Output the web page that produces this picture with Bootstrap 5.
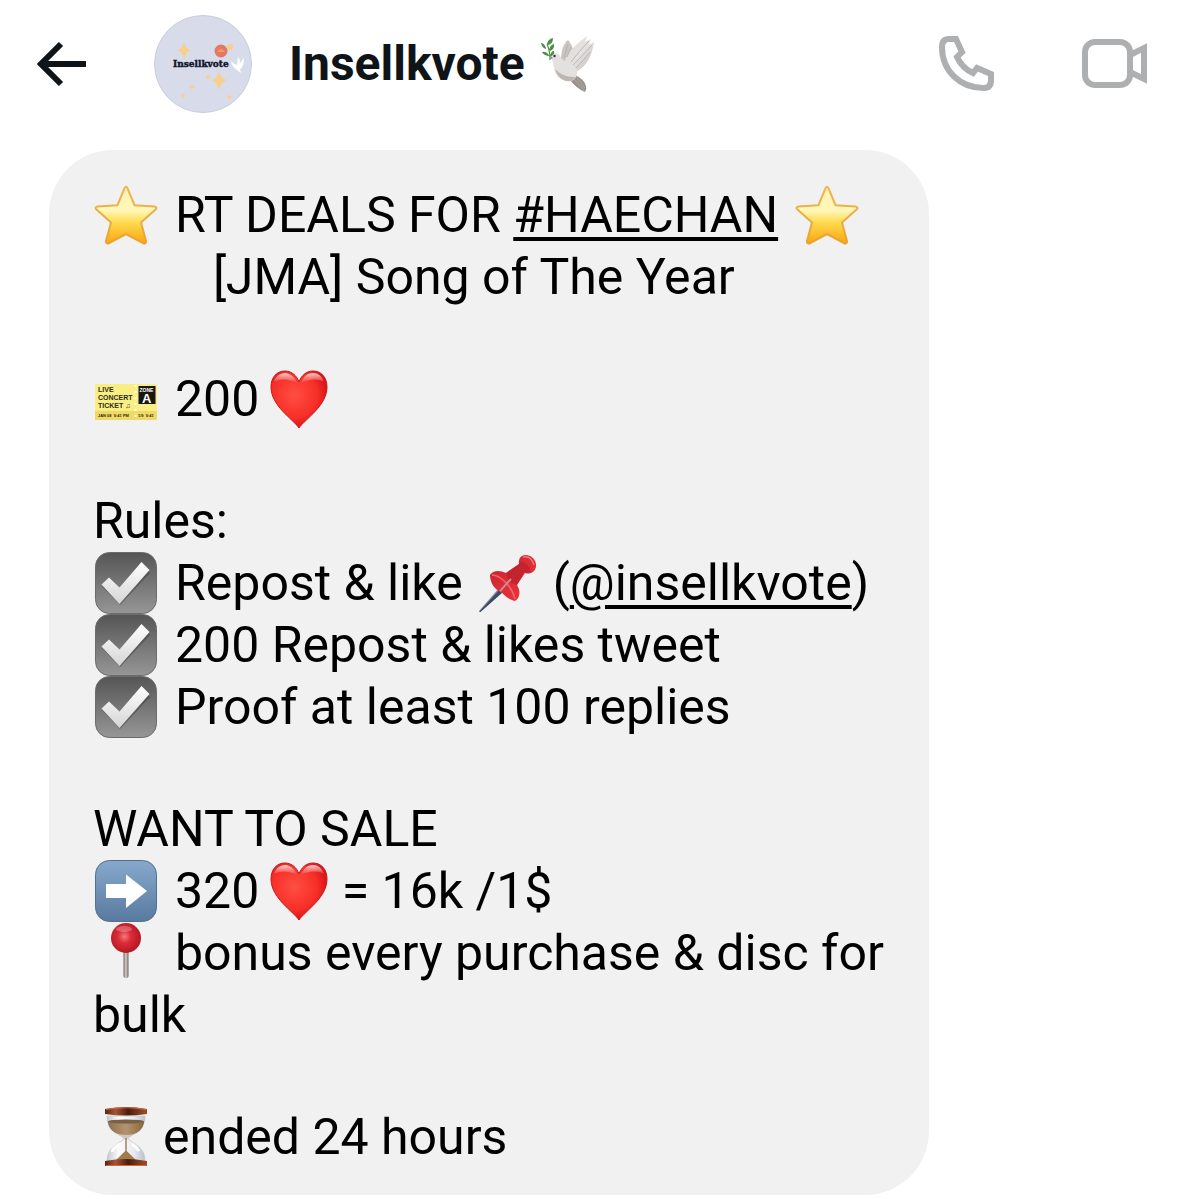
<!DOCTYPE html>
<html lang="en">
<head>
<meta charset="utf-8">
<meta name="viewport" content="width=device-width, initial-scale=1">
<title>Insellkvote</title>
<link href="https://cdn.jsdelivr.net/npm/bootstrap@5.3.0/dist/css/bootstrap.min.css" rel="stylesheet">
<style>
body{background:#fff;color:#000;font-family:Roboto,"Liberation Sans",sans-serif}
svg{display:block}
.chat-head{height:128px;padding:0 52px 0 36px;color:#0f1419}
.icon-btn{color:#adafb0;line-height:1}
.back-btn{color:#0f1419;margin-right:66px}
.avatar{width:98px;height:98px;margin-right:37px}
.chat-name{font-size:48px;line-height:56px;font-weight:700}
.call-btn{margin-right:86px}
.bubble{max-width:880px;margin:22px 49px 0;padding:34px 42px 27px 44px;border-radius:64px;background:#f1f1f1;font-size:50px;line-height:62px}
.block{margin:0 0 60px}
.block:last-child{margin-bottom:0}
.bubble a{color:#000;text-decoration:underline;text-decoration-thickness:4px;text-underline-offset:5px}
.emo{display:inline-block;vertical-align:top;width:66px;height:62px}
.emo-heart{width:60px;margin-left:10px}
.emo-pin{margin:0 12px}
.indent{padding-left:120px}
</style>
<script src="https://cdn.jsdelivr.net/npm/bootstrap@5.3.0/dist/js/bootstrap.bundle.min.js" defer></script>
</head>
<body>
<svg width="0" height="0" class="position-absolute" aria-hidden="true">
<defs>
<linearGradient id="gStar" x1="0" y1="0" x2="0" y2="1"><stop offset="0" stop-color="#fff0b4"/><stop offset=".42" stop-color="#fff7b8"/><stop offset=".62" stop-color="#ffdc50"/><stop offset="1" stop-color="#f9a412"/></linearGradient>
<linearGradient id="gStarEdge" x1="0" y1="0" x2="0" y2="1"><stop offset="0" stop-color="#f0b84c"/><stop offset=".5" stop-color="#e3b04c"/><stop offset="1" stop-color="#eda227"/></linearGradient>
<radialGradient id="gHeart" cx=".42" cy=".42" r=".62"><stop offset="0" stop-color="#ff4e43"/><stop offset=".65" stop-color="#f72f28"/><stop offset="1" stop-color="#d31016"/></radialGradient>
<linearGradient id="gGloss" x1="0" y1="0" x2="0" y2="1"><stop offset="0" stop-color="#fff" stop-opacity=".75"/><stop offset="1" stop-color="#fff" stop-opacity="0"/></linearGradient>
<linearGradient id="gCheck" x1="0" y1="0" x2="0" y2="1"><stop offset="0" stop-color="#555"/><stop offset="1" stop-color="#969696"/></linearGradient>
<linearGradient id="gTick" x1="0" y1="0" x2="0" y2="1"><stop offset="0" stop-color="#fff"/><stop offset="1" stop-color="#d5d5d5"/></linearGradient>
<linearGradient id="gBlue" x1="0" y1="0" x2="0" y2="1"><stop offset="0" stop-color="#86a9cb"/><stop offset="1" stop-color="#587a9f"/></linearGradient>
<radialGradient id="gBall" cx=".45" cy=".45" r=".55"><stop offset="0" stop-color="#f4797c"/><stop offset=".4" stop-color="#dc2c38"/><stop offset="1" stop-color="#b51823"/></radialGradient>
<linearGradient id="gRod" x1="0" y1="0" x2="1" y2="0"><stop offset="0" stop-color="#6c625d"/><stop offset=".45" stop-color="#d8cfc9"/><stop offset="1" stop-color="#71655f"/></linearGradient>
<linearGradient id="gWood" x1="0" y1="0" x2="1" y2="0"><stop offset="0" stop-color="#5a2413"/><stop offset=".25" stop-color="#a65636"/><stop offset=".55" stop-color="#4c1b0d"/><stop offset=".8" stop-color="#7e3a20"/><stop offset="1" stop-color="#a04c28"/></linearGradient>
<linearGradient id="gSand" x1="0" y1="0" x2="1" y2="0"><stop offset="0" stop-color="#8d7050"/><stop offset=".5" stop-color="#b4946c"/><stop offset="1" stop-color="#86683f"/></linearGradient>
<linearGradient id="gGlass" x1="0" y1="0" x2="1" y2="0"><stop offset="0" stop-color="#c3c8d3"/><stop offset=".3" stop-color="#fafbfd"/><stop offset=".7" stop-color="#e9ecf1"/><stop offset="1" stop-color="#b9bec9"/></linearGradient>
<linearGradient id="gPin" x1="0" y1="0" x2="1" y2="1"><stop offset="0" stop-color="#c3202a"/><stop offset=".5" stop-color="#d92f38"/><stop offset="1" stop-color="#f5303a"/></linearGradient>
<linearGradient id="gDove" x1="0" y1="0" x2="1" y2="1"><stop offset="0" stop-color="#dedad7"/><stop offset=".5" stop-color="#e4e1df"/><stop offset="1" stop-color="#b8b1ad"/></linearGradient>
<symbol id="star" viewBox="0 0 66 62"><path d="M31.400 4.500Q33 1.200 34.600 4.500L41.500 21.200 61.500 22.600Q64.800 23.300 62.500 25.600L48 38.500 53 57Q53.200 60.500 50 59.200L33 50 16 59.200Q12.800 60.500 13 57L18 38.500 3.500 25.600Q1.200 23.300 4.500 22.600L24.500 21.200Z" fill="url(#gStar)" stroke="url(#gStarEdge)" stroke-width="2" stroke-linejoin="round"/></symbol>
<symbol id="heart" viewBox="0 0 60 62"><path d="M30 60C24 51 2 38 2 19 2 9 8 3 16 3 23 3 28 8 30 14 32 8 37 3 44 3 52 3 58 9 58 19 58 38 36 51 30 60Z" fill="url(#gHeart)" stroke="#c8171b" stroke-width="1"/><path d="M5 14C7 7 12 5 17 5 22 6 26 9 28 15 20 11 12 10 5 14ZM32 15C34 9 38 5 44 5 49 5 53 8 55 14 48 10 40 11 32 15Z" fill="url(#gGloss)"/></symbol>
<symbol id="check" viewBox="0 0 66 62"><rect x="2.500" y=".5" width="61" height="61" rx="14" fill="url(#gCheck)" stroke="#6b6b6b"/><path d="M9 34 16 27 26.500 37 49 12.500 57 21 27 53Z" fill="#3d3d3d" opacity=".5"/><path d="M8.500 32.500 16 25.500 26.500 35.500 48.500 10 56.500 18 26.500 52Z" fill="url(#gTick)"/></symbol>
<symbol id="right" viewBox="0 0 66 62"><rect x="2.500" y=".5" width="61" height="61" rx="14" fill="url(#gBlue)" stroke="#54708f"/><path d="M13 24H33V14.500L54 31 33 48V38H13Z" fill="#fff"/></symbol>
<symbol id="round-pin" viewBox="0 0 66 62"><rect x="30.500" y="28" width="5" height="28" rx="2" fill="url(#gRod)"/><circle cx="33" cy="16" r="15" fill="url(#gBall)"/><ellipse cx="31" cy="7" rx="8" ry="3" fill="#fff" opacity=".25"/></symbol>
<symbol id="pushpin" viewBox="0 0 66 62"><path d="M24 36 4 59 5 60 28 40Z" fill="#8393ad"/><path d="M25 37 4 60 5.500 60 28 40Z" fill="#3e4b66"/><path d="M15 23C18 18 25 18 31 21L44 12C43 5 48 1 55 4 61 7 63 14 59 19 56 22 52 22 50 21L42 33C46 39 45 46 40 49 35 48 31 45 27 41 20 38 15 31 15 23Z" fill="url(#gPin)"/><path d="M44 11C48 8 54 12 56 20L50 21 45 16ZM31 21 44 12 49 21 42 33C36 32 32 28 31 21Z" fill="#b91f29" opacity=".65"/><path d="M17 23C25 23 37 34 40 47" stroke="#fa6268" stroke-width="1.500" fill="none"/><path d="M25 39 36 27" stroke="#d48690" stroke-width="2"/><path d="M48 5Q56 3 59 13" stroke="#ff7378" stroke-width="1.500" fill="none"/></symbol>
<symbol id="hourglass" viewBox="0 0 66 62"><path d="M14 10H52C53 24 39 26 35 33 40 38 52 40 52 55H14C14 40 27 38 31 33 26 26 13 24 14 10Z" fill="url(#gGlass)" stroke="#c2c5cc" stroke-width=".7"/><path d="M15 16Q33 12 51 16C50 27 39 28 34 33H32C27 28 16 27 15 16Z" fill="url(#gSand)"/><path d="M22 27Q33 31 44 27Q38 30 34 34H32Q28 30 22 27Z" fill="#d9d9d8" opacity=".75"/><ellipse cx="33" cy="15.500" rx="18" ry="2" fill="#786044"/><path d="M32.300 32H33.700V45L44 55H22L32.300 45Z" fill="#a17b4c"/><path d="M19 46C20 42 23 40 27 38M46 45C44 42 42 40 39 38" stroke="#fff" stroke-width="3" fill="none"/><path d="M12 3Q33-1 54 3V8Q33 11 12 8ZM12 55Q33 51 54 55V60H12Z" fill="url(#gWood)"/><path d="M13 3.500Q33 0 53 3.500M13 59.500H53" stroke="#c46d43" fill="none"/></symbol>
<symbol id="dove" viewBox="0 0 54 56"><path d="M9 24Q9 15 6 8" stroke="#5b8b47" stroke-width="1.200" fill="none"/><path d="M6 8Q7 3 12 2 12 8 7 9ZM8 14Q9 9 13 8 14 13 9 15ZM5 12Q3 7 0 7 1 12 5 13ZM8 19Q5 15 1 16 3 20 9 20ZM9 20Q10 15 13 15 14 19 10 21Z" fill="#459042"/><path d="M20 24C20 14 23 7 27 4 29 6 31 9 32 14L30 28Z" fill="#cac5c1"/><path d="M23 27C27 14 36 8 46 0L44 6 50 3 48 9 53 6C51 20 46 30 35 36L27 40Z" fill="url(#gDove)"/><path d="M26 41 34 39Q43 43 45 50 46 53 44 56 36 53 28 43Z" fill="#9b928e"/><path d="M10 22C11 17 17 16 19 20 22 27 31 27 36 34 37 42 33 46 25 45 15 43 13 34 12 26Z" fill="#e3e0dd"/><path d="M14 33Q16 42 25 45 32 46 35 41 23 42 14 33Z" fill="#bdb6b1"/><path d="M30 26Q38 15 48 5M32 29Q42 19 51 9M35 32Q43 24 49 16M23 22 27 8M26 21 30 11M33 43 43 54M36 42 44 52" stroke="#b5aea9" stroke-width=".8" fill="none"/><path d="M10 21 9 23 12 22Z" fill="#776"/><circle cx="13.500" cy="20" r="1.200" fill="#333"/></symbol>
<symbol id="ticket" viewBox="0 0 66 62"><rect x="2" y="16" width="62" height="36" fill="#f9ee84"/><path d="M2 43H64V52H2Z" fill="#f0d965"/><path d="M42.500 17V51" stroke="#fff" stroke-width="2" stroke-dasharray="2 4"/><rect x="45.500" y="18" width="17" height="18" fill="#18170f"/><g font-family="Liberation Sans, sans-serif" font-weight="700" fill="#2c2a16"><text x="5" y="24" font-size="7">LIVE</text><text x="5" y="32" font-size="7">CONCERT</text><text x="5" y="40" font-size="7">TICKET ♫</text><text x="5" y="49" font-size="4">JAN 08&#160; 9:41 PM</text><text x="45" y="49" font-size="4">1/9&#160; 9:41</text><text x="46.500" y="23.500" font-size="5" fill="#fff">ZONE</text><text x="49" y="34.500" font-size="13" fill="#fff">A</text></g></symbol>
</defs>
</svg>

<header class="chat-head d-flex align-items-center">
  <button type="button" class="btn p-0 border-0 back-btn" aria-label="Back"><svg width="52" height="46" viewBox="0 0 52 46" fill="none" stroke="currentColor" stroke-width="6"><path d="M50 23H5M25 3 5 23 25 43"/></svg></button>
  <svg class="avatar flex-shrink-0" viewBox="0 0 98 98" role="img" aria-label="Insellkvote avatar"><circle cx="49" cy="49" r="48.500" fill="#d8dcea" stroke="#c9cdd9"/><g fill="#f8d08a"><path d="M30 26Q31 34 37 35 31 37 30 45 29 37 23 35 29 34 30 26ZM65 55Q66 64 73 65 66 67 65 76 64 67 57 65 64 64 65 55Z"/><circle cx="76" cy="32" r="3"/><path d="M38 69 39 71 41 72 39 73 38 75 37 73 35 72 37 71ZM29 78 30 80 32 81 30 82 29 83 28 81 26 81 28 80ZM75 79 76 81 79 82 76 83 75 85 74 83 72 82 74 81ZM54 59 55 61 57 62 55 63 54 65 53 63 51 62 53 61Z"/></g><circle cx="67" cy="36" r="6.500" fill="#e37962"/><path d="M63 37Q67 31 71 37Z" fill="#f29b62"/><path d="M77 46Q80 49 83 50L84 42Q86 44 86 48L90 43Q90 52 86 54L87 58 83 55Q78 52 77 46Z" fill="#fff"/><text x="19" y="52" font-family="DejaVu Serif, serif" font-size="9" font-weight="700" fill="#11152a" stroke="#11152a" stroke-width=".4">Insellkvote</text></svg>
  <h1 class="chat-name d-flex align-items-center mb-0 me-auto">Insellkvote<svg class="ms-3" width="54" height="56" role="img" aria-label="dove"><use href="#dove"/></svg></h1>
  <button type="button" class="btn p-0 border-0 icon-btn call-btn" aria-label="Audio call"><svg width="58" height="58" viewBox="0 0 58 58" fill="none" stroke="currentColor" stroke-width="6"><path d="M11 4H18L24 17 19 22Q24 33 35 38L39 33 53 39V45Q53 53 46 53C22 53 4 36 4 12Q4 4 11 4Z"/></svg></button>
  <button type="button" class="btn p-0 border-0 icon-btn" aria-label="Video call"><svg width="66" height="50" viewBox="0 0 66 50" fill="none" stroke="currentColor" stroke-width="6"><rect x="3" y="3" width="45" height="43" rx="10"/><path d="M48 16 62 9V40L48 33"/></svg></button>
</header>

<main class="bubble">
  <div class="block"><svg class="emo me-3" role="img" aria-label="star"><use href="#star"/></svg>RT DEALS FOR <a href="#haechan">#HAECHAN</a><svg class="emo ms-3" role="img" aria-label="star"><use href="#star"/></svg>
    <div class="indent">[JMA] Song of The Year</div></div>
  <div class="block"><svg class="emo me-3" role="img" aria-label="ticket"><use href="#ticket"/></svg>200<svg class="emo emo-heart" role="img" aria-label="heart"><use href="#heart"/></svg></div>
  <div class="block">
    <div>Rules:</div>
    <div><svg class="emo me-3" role="img" aria-label="check"><use href="#check"/></svg>Repost &amp; like<svg class="emo emo-pin" role="img" aria-label="pushpin"><use href="#pushpin"/></svg>(<a href="#insellkvote">@insellkvote</a>)</div>
    <div><svg class="emo me-3" role="img" aria-label="check"><use href="#check"/></svg>200 Repost &amp; likes tweet</div>
    <div><svg class="emo me-3" role="img" aria-label="check"><use href="#check"/></svg>Proof at least 100 replies</div>
  </div>
  <div class="block">
    <div>WANT TO SALE</div>
    <div><svg class="emo me-3" role="img" aria-label="right arrow"><use href="#right"/></svg>320<svg class="emo emo-heart" role="img" aria-label="heart"><use href="#heart"/></svg> = 16k /1$</div>
    <div><svg class="emo me-3" role="img" aria-label="round pushpin"><use href="#round-pin"/></svg>bonus every purchase &amp; disc for bulk</div>
  </div>
  <div class="block"><svg class="emo me-1" role="img" aria-label="hourglass"><use href="#hourglass"/></svg>ended 24 hours</div>
</main>
</body>
</html>
